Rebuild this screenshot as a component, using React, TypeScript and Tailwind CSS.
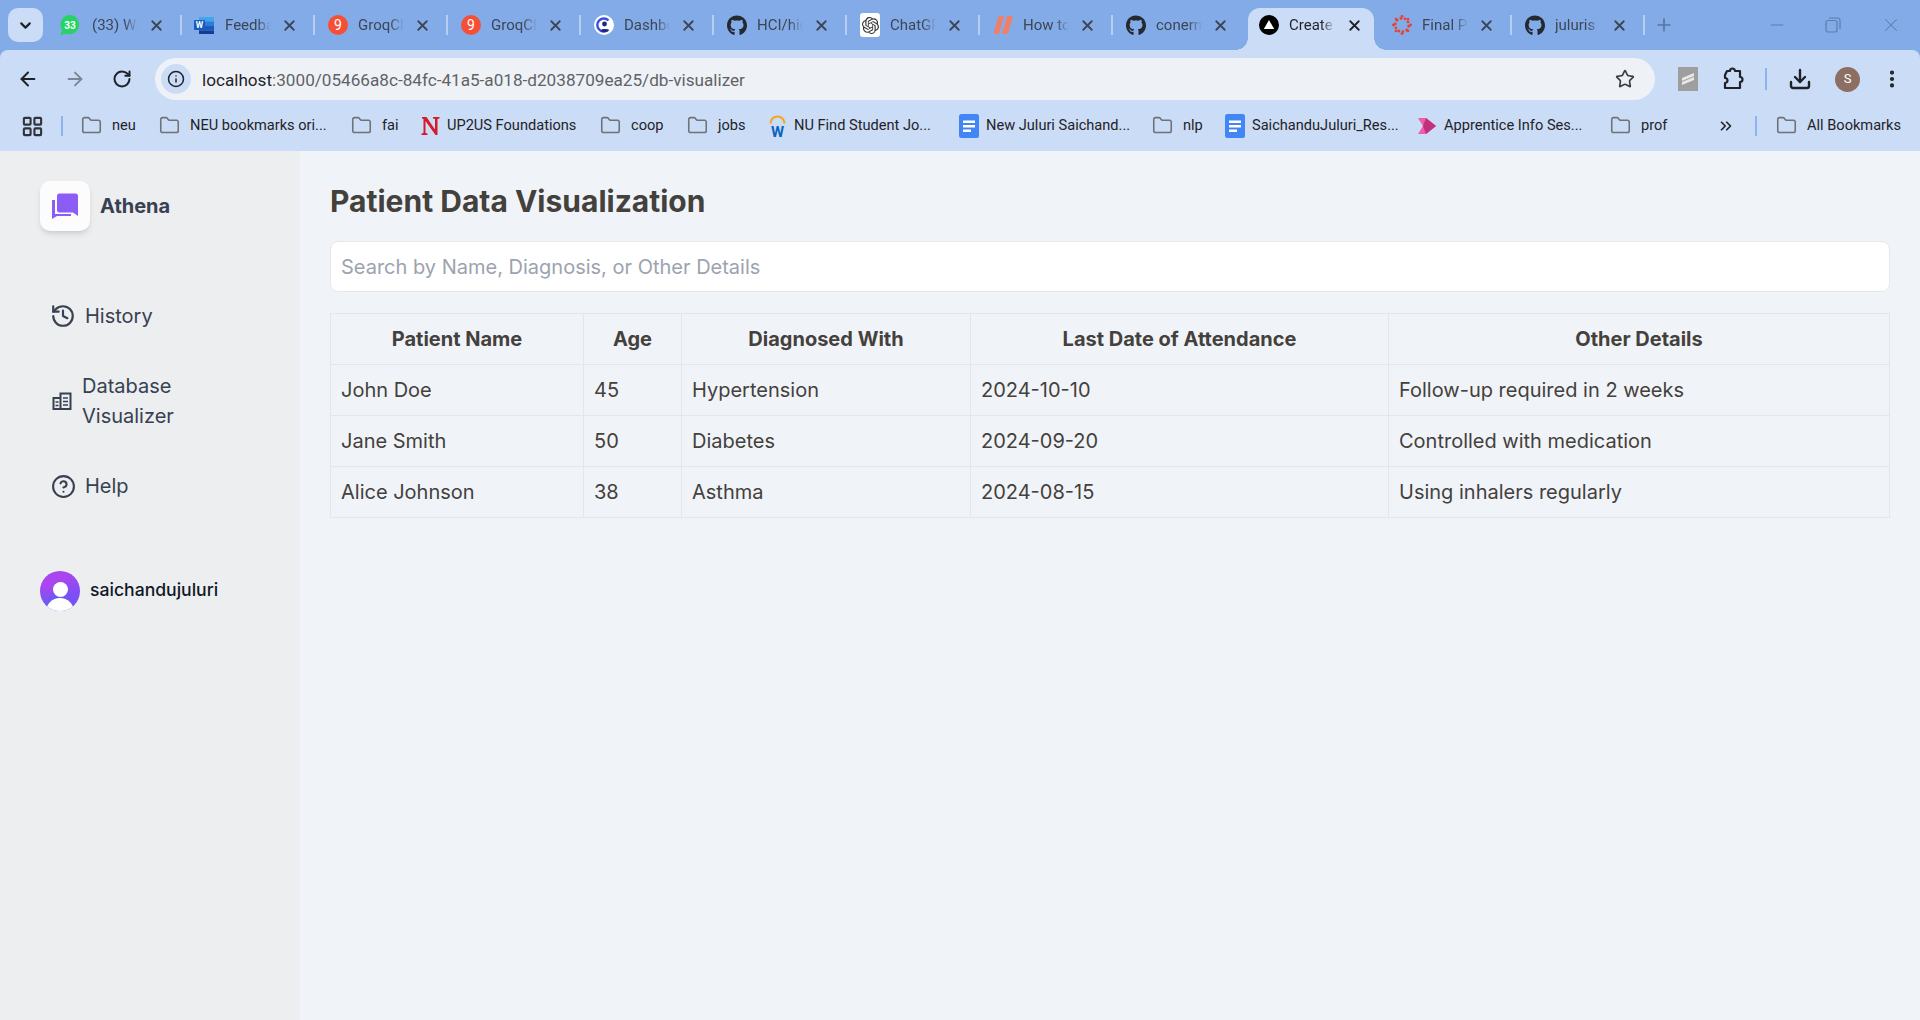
import React from 'react';
import {
  ArrowLeft,
  ArrowRight,
  ChevronDown,
  ChevronsRight,
  CircleHelp,
  Download,
  EllipsisVertical,
  Folder,
  History,
  Info,
  LayoutGrid,
  Minus,
  Plus,
  RotateCw,
  Star,
  X,
} from 'lucide-react';
import { FaGithub } from 'react-icons/fa';
import { SiOpenai } from 'react-icons/si';

const WhatsAppIcon = () => (
  <svg className="-translate-x-[2px]" width="20" height="24" viewBox="0 0 20 24">
    <path d="M10 2a9.5 9.5 0 0 0-8 14.6L.6 22l5.6-1.4A9.6 9.6 0 1 0 10 2z" fill="#25D366" />
    <text x="10" y="16" textAnchor="middle" fontSize="10" fontWeight="700" fill="#fff" fontFamily="Roboto, sans-serif">33</text>
  </svg>
);

const WordIcon = () => (
  <svg className="-translate-x-[1px]" width="20" height="20" viewBox="0 0 20 20">
    <rect x="5" y="2" width="15" height="4.5" fill="#41A5EE" />
    <rect x="5" y="6.5" width="15" height="4.5" fill="#2B7CD3" />
    <rect x="5" y="11" width="15" height="4.5" fill="#185ABD" />
    <rect x="5" y="15.5" width="15" height="3.5" fill="#103F91" />
    <rect x="0" y="5" width="11" height="10" rx="1" fill="#185ABD" />
    <text x="5.5" y="13" textAnchor="middle" fontSize="8.5" fontWeight="700" fill="#fff" fontFamily="Roboto, sans-serif">W</text>
  </svg>
);

const GroqIcon = () => (
  <div className="w-5 h-5 rounded-full bg-[#F55036] flex items-center justify-center text-white text-[14px] leading-none">9</div>
);

const DashIcon = () => (
  <svg width="20" height="20" viewBox="0 0 20 20">
    <circle cx="10" cy="10" r="10" fill="#fff" />
    <path d="M14.5 5.5A6.5 6.5 0 1 0 14.5 14.5" fill="none" stroke="#3B4FE0" strokeWidth="2.4" />
    <circle cx="10.5" cy="9" r="2.4" fill="#1E2A78" />
    <path d="M6.5 16c.5-2.6 7-2.6 8 0a8 8 0 0 1-8 0z" fill="#1E2A78" />
  </svg>
);

const ChatIcon = () => (
  <div className="w-5 h-6 rounded-[3px] bg-white flex items-center justify-center">
    <SiOpenai size={17} className="text-[#333]" />
  </div>
);

const SlashIcon = () => (
  <svg width="20" height="20" viewBox="0 0 20 20">
    <path d="M5.5 1H11L6 19H.5zM14 1h6l-5 18H9z" fill="#EE8069" />
  </svg>
);

const VercelIcon = () => (
  <svg width="20" height="20" viewBox="0 0 20 20">
    <circle cx="10" cy="10" r="10" fill="#000" />
    <path d="M10 5l5.2 9H4.8z" fill="#fff" />
  </svg>
);

const CanvasIcon = () => (
  <svg width="20" height="20" viewBox="0 0 20 20" fill="#E8412F">
    <circle cx="10" cy="10" r="6.8" fill="none" stroke="#E8412F" strokeWidth="2.4" strokeDasharray="2.6 1.6" />
    <circle cx="10" cy="1.4" r="1.4" />
    <circle cx="10" cy="18.6" r="1.4" />
    <circle cx="1.4" cy="10" r="1.4" />
    <circle cx="18.6" cy="10" r="1.4" />
    <circle cx="4" cy="4" r="1.3" />
    <circle cx="16" cy="4" r="1.3" />
    <circle cx="4" cy="16" r="1.3" />
    <circle cx="16" cy="16" r="1.3" />
  </svg>
);

const GithubIcon = () => <FaGithub size={21} className="text-[#24292f]" />;

const tabs = [
  { title: '(33) WhatsApp', icon: <WhatsAppIcon /> },
  { title: 'Feedback', icon: <WordIcon /> },
  { title: 'GroqCloud', icon: <GroqIcon /> },
  { title: 'GroqCloud', icon: <GroqIcon /> },
  { title: 'Dashboard', icon: <DashIcon /> },
  { title: 'HCI/hig', icon: <GithubIcon /> },
  { title: 'ChatGPT', icon: <ChatIcon /> },
  { title: 'How to', icon: <SlashIcon /> },
  { title: 'conerm', icon: <GithubIcon /> },
  { title: 'Create', icon: <VercelIcon />, active: true },
  { title: 'Final Project', icon: <CanvasIcon /> },
  { title: 'juluris', icon: <GithubIcon /> },
];

const FolderIcon = () => <Folder size={21} strokeWidth={1.8} className="text-[#6f7276]" />;

const DocIcon = () => (
  <svg width="20" height="24" viewBox="0 0 20 24">
    <rect width="20" height="24" rx="2.5" fill="#4285F4" />
    <path d="M4 6.5h12v2.4H4zM4 11h12v2.4H4zM4 15.5h8v2.4H4z" fill="#fff" />
  </svg>
);

const NIcon = () => (
  <svg width="19" height="20" viewBox="0 0 19 20">
    <path d="M1 1h4.5L14 13.5V3l-2-.4V1h6.5v1.6L16.5 3v16h-2L4.5 5v12l2 .5V19H.5v-1.5l2-.5V3L1 2.6z" fill="#D41B2C" />
  </svg>
);

const WorkdayIcon = () => (
  <svg width="19" height="24" viewBox="0 0 19 24">
    <path d="M2.5 9.5a7 7 0 0 1 14 0" fill="none" stroke="#F5A623" strokeWidth="2.2" />
    <text x="9.5" y="23" textAnchor="middle" fontSize="15" fontWeight="700" fill="#0B64C0" fontFamily="Roboto, sans-serif">W</text>
  </svg>
);

const PinkArrowIcon = () => (
  <svg width="18" height="18" viewBox="0 0 18 18">
    <path d="M0 1h8l10 8-10 8H0l5-8z" fill="#EE5FA7" />
    <path d="M8 1l10 8-10 8-3-8z" fill="#C22F7C" />
  </svg>
);

const bookmarks = [
  { label: 'neu', icon: <FolderIcon />, w: 'w-[24px]', gap: 'ml-[18px]', folder: true },
  { label: 'NEU bookmarks ori...', icon: <FolderIcon />, w: 'w-[140px]', gap: 'ml-[23px]', folder: true },
  { label: 'fai', icon: <FolderIcon />, w: 'w-[16px]', gap: 'ml-[21px]', folder: true },
  { label: 'UP2US Foundations', icon: <NIcon />, w: 'w-[130px]', gap: 'ml-[22px]' },
  { label: 'coop', icon: <FolderIcon />, w: 'w-[33px]', gap: 'ml-[23px]', folder: true },
  { label: 'jobs', icon: <FolderIcon />, w: 'w-[28px]', gap: 'ml-[23px]', folder: true },
  { label: 'NU Find Student Jo...', icon: <WorkdayIcon />, w: 'w-[138px]', gap: 'ml-[21px]' },
  { label: 'New Juluri Saichand...', icon: <DocIcon />, w: 'w-[144px]', gap: 'ml-[27px]' },
  { label: 'nlp', icon: <FolderIcon />, w: 'w-[21px]', gap: 'ml-[22px]', folder: true },
  { label: 'SaichanduJuluri_Res...', icon: <DocIcon />, w: 'w-[143px]', gap: 'ml-[21px]' },
  { label: 'Apprentice Info Ses...', icon: <PinkArrowIcon />, w: 'w-[139px]', gap: 'ml-[22px]' },
  { label: 'prof', icon: <FolderIcon />, w: 'w-[28px]', gap: 'ml-[27px]', folder: true },
];

const patients = [
  { name: 'John Doe', age: 45, diagnosis: 'Hypertension', date: '2024-10-10', details: 'Follow-up required in 2 weeks' },
  { name: 'Jane Smith', age: 50, diagnosis: 'Diabetes', date: '2024-09-20', details: 'Controlled with medication' },
  { name: 'Alice Johnson', age: 38, diagnosis: 'Asthma', date: '2024-08-15', details: 'Using inhalers regularly' },
];

const columns = ['Patient Name', 'Age', 'Diagnosed With', 'Last Date of Attendance', 'Other Details'];

const TabStrip = () => (
  <div className="h-[50px] flex items-start shrink-0">
    <button className="ml-2 mt-2 w-[35px] h-[34px] rounded-[10px] bg-[#CBDCF6] flex items-center justify-center">
      <ChevronDown size={17} strokeWidth={3} className="text-[#1f2328]" />
    </button>
    <div className="ml-[6px] flex">
      {tabs.map((tab, i) =>
        tab.active ? (
          <div key={i} className="relative w-[126px] h-[42px] mt-2 ml-[2px] mr-[5px] pb-2 rounded-t-[12px] bg-[#CBDCF6] flex items-center pl-[11px]">
            <div className="absolute bottom-0 -left-3 w-3 h-3 bg-[radial-gradient(circle_at_0_0,transparent_11.5px,#CBDCF6_12px)]" />
            <div className="absolute bottom-0 -right-3 w-3 h-3 bg-[radial-gradient(circle_at_100%_0,transparent_11.5px,#CBDCF6_12px)]" />
            <div className="w-5 flex justify-center shrink-0">{tab.icon}</div>
            <span className="ml-[10px] w-[46px] overflow-hidden whitespace-nowrap text-[15px] text-[#1f2328] [mask-image:linear-gradient(to_right,black_70%,transparent)]">{tab.title}</span>
            <X size={17} strokeWidth={2.6} className="ml-[11px] text-[#1f2328]" />
          </div>
        ) : (
          <div key={i} className="w-[133px] h-[50px] flex items-center pl-[13px] relative">
            <div className="w-5 flex justify-center shrink-0">{tab.icon}</div>
            <span className="ml-[10px] w-[46px] overflow-hidden whitespace-nowrap text-[15px] text-[#3c4654] [mask-image:linear-gradient(to_right,black_70%,transparent)]">{tab.title}</span>
            <X size={17} strokeWidth={2.6} className="ml-[10px] text-[#3c4654]" />
            {i !== 8 && <div className="absolute right-0 top-[15px] w-[2px] h-[20px] bg-[#B7CEF2]" />}
          </div>
        ),
      )}
    </div>
    <Plus size={20} strokeWidth={2} className="ml-[9px] mt-[15px] text-[#56749f]" />
    <div className="ml-auto flex items-center text-[#5d7cad] h-[50px]">
      <Minus size={20} strokeWidth={1.2} />
      <svg className="ml-[38px]" width="16" height="16" viewBox="0 0 16 16" fill="none" stroke="currentColor" strokeWidth="1.2">
        <rect x="1" y="3.5" width="11" height="11.5" rx="2" />
        <path d="M4 1h8.5A2.5 2.5 0 0 1 15 3.5V12" />
      </svg>
      <X className="ml-[39px] mr-[18px]" size={22} strokeWidth={1.1} />
    </div>
  </div>
);

const AddressBar = () => (
  <div className="h-[50px] flex items-center shrink-0 pl-1 pt-[8px]">
    <div className="w-[47px] flex justify-center"><ArrowLeft size={22} strokeWidth={2.2} className="text-[#1f2328]" /></div>
    <div className="w-[47px] flex justify-center"><ArrowRight size={22} strokeWidth={2} className="text-[#7c8695]" /></div>
    <div className="w-[47px] flex justify-center"><RotateCw size={20} strokeWidth={2.4} className="text-[#1f2328]" /></div>
    <div className="ml-[10px] w-[1500px] h-[42px] rounded-full bg-[#EEF2F7] flex items-center pl-[6px]">
      <div className="w-[30px] h-[30px] rounded-full bg-[#CBDCF6] flex items-center justify-center">
        <Info size={18} strokeWidth={2} className="text-[#1f2328]" />
      </div>
      <span className="ml-[11px] pt-[3px] text-[17.15px] text-[#5f6368] whitespace-nowrap"><span className="text-[#1f2328]">localhost</span>:3000/05466a8c-84fc-41a5-a018-d2038709ea25/db-visualizer</span>
      <Star size={20} strokeWidth={2} className="ml-auto mr-[20px] text-[#3a3f45]" />
    </div>
    <div className="ml-[23px] w-[20px] h-[24px] bg-[#9e9e9e] flex items-center justify-center">
      <svg width="14" height="14" viewBox="0 0 14 14"><path d="M1 6l12-5v3L1 9zM1 10l12-5v3L1 13z" fill="#e8e8e8" /></svg>
    </div>
    <svg className="ml-[24px]" width="22" height="24" viewBox="0 0 22 24" fill="none" stroke="#1f2328" strokeWidth="2.2" strokeLinejoin="round">
      <path d="M5 4h3a2.5 2.5 0 0 1 5 0h5v6a2.5 2.5 0 0 1 0 5v6H3v-5a2.5 2.5 0 0 0 0-5V8z" />
    </svg>
    <div className="ml-[21px] w-[2px] h-[22px] bg-[#8DB4EC]" />
    <Download size={24} strokeWidth={2.4} className="ml-[21px] text-[#1f2328]" />
    <div className="ml-[23px] w-[25px] h-[25px] rounded-full bg-[#8D6E63] flex items-center justify-center text-white text-[13px]">S</div>
    <EllipsisVertical size={22} strokeWidth={2.6} className="ml-[21px] text-[#1f2328]" />
  </div>
);

const BookmarksBar = () => (
  <div className="h-[50px] flex items-center shrink-0 pl-[21px] pt-[2px] text-[14.6px] text-[#1f2328]">
    <LayoutGrid size={23} strokeWidth={2.2} className="text-[#30343a]" />
    <div className="ml-[17px] w-[2px] h-[20px] bg-[#8DB4EC]" />
    {bookmarks.map((b, i) => (
      <div key={i} className={`flex items-center ${b.gap}`}>
        <div className={b.folder ? 'w-[21px] flex justify-center shrink-0' : 'w-5 flex justify-center shrink-0'}>{b.icon}</div>
        <span className={`${b.folder ? 'ml-[10px]' : 'ml-[7px]'} whitespace-nowrap ${b.w}`}>{b.label}</span>
      </div>
    ))}
    <ChevronsRight size={18} strokeWidth={2.2} className="ml-[48px] text-[#1f2328]" />
    <div className="ml-[20px] w-[2px] h-[20px] bg-[#8DB4EC]" />
    <div className="ml-[19px] flex items-center">
      <FolderIcon />
      <span className="ml-[10px] whitespace-nowrap">All Bookmarks</span>
    </div>
  </div>
);

const Sidebar = () => (
  <aside className="w-[300px] shrink-0 bg-[#ECEEF0] pl-10 pt-[30px] font-['Inter',sans-serif]">
    <div className="flex items-center">
      <div className="w-[50px] h-[50px] rounded-[10px] bg-[#FCFCFC] shadow-md flex items-center justify-center">
        <svg width="26" height="26" viewBox="0 0 26 26">
          <path d="M0 7h3v14h16v2H5l-5 3z" fill="#8B5CF6" />
          <path d="M5 3a2.5 2.5 0 0 1 2.500-2.500h16A2.500 2.500 0 0 1 26 3v20l-5-3.500H7.500A2.500 2.500 0 0 1 5 17z" fill="#8B5CF6" />
        </svg>
      </div>
      <span className="ml-[10px] text-[20px] font-bold text-[#374151]">Athena</span>
    </div>

    <nav className="mt-[70px] pl-3 flex flex-col gap-10 text-[20px] leading-[30px] text-[#374151]">
      <div className="flex items-center">
        <History size={26} strokeWidth={2} className="-ml-[2px]" />
        <span className="ml-[9px]">History</span>
      </div>
      <div className="flex items-center">
        <svg width="20" height="18" viewBox="0 0 19 18" fill="none" stroke="currentColor" strokeWidth="2">
          <path d="M1 6h7v11H1zM8 1.500h10V17H8z" />
          <path d="M3 10h3M3 13.500h3M10.500 6h5M10.500 9.500h5M10.500 13h5" strokeWidth="1.500" />
        </svg>
        <span className="ml-[10px] w-[100px]">Database Visualizer</span>
      </div>
      <div className="flex items-center">
        <CircleHelp size={25} strokeWidth={2} className="-ml-px" />
        <span className="ml-[9px]">Help</span>
      </div>
    </nav>

    <div className="mt-[70px] flex items-center">
      <div className="relative w-10 h-10 rounded-full overflow-hidden bg-[conic-gradient(from_200deg,#5b5ff5,#a946f0,#a946f0,#7c4ff5,#5b5ff5)]">
        <div className="absolute left-[12.500px] top-[11px] w-[15px] h-[15px] rounded-full bg-white" />
        <div className="absolute left-[6px] top-[27px] w-[28px] h-[20px] rounded-t-full bg-white" />
      </div>
      <span className="ml-[10px] -mt-px text-[17.6px] font-medium text-[#111827]">saichandujuluri</span>
    </div>
  </aside>
);

export default function App() {
  return (
    <div className="h-[1020px] flex flex-col overflow-hidden bg-[#83ABE8] font-['Roboto',sans-serif]">
      <TabStrip />
      <div className="bg-[#CBDCF6] rounded-t-[8px] pb-px shrink-0">
        <AddressBar />
        <BookmarksBar />
      </div>
      <div className="flex-1 flex">
        <Sidebar />
        <main className="flex-1 bg-[#F0F4F9] pl-[30px] pr-[31px] pt-8 font-['Inter',sans-serif] text-[#44403c]">
          <h1 className="text-[30px] leading-9 font-bold">Patient Data Visualization</h1>
          <input
            placeholder="Search by Name, Diagnosis, or Other Details"
            className="mt-[22px] w-full h-[51px] px-[10px] bg-white border border-[#E5E7EB] rounded-lg text-[20px] placeholder:text-[#9CA3AF] outline-none"
          />
          <table className="mt-[21px] w-[1559px] table-fixed border-collapse text-[20px]">
            <colgroup>
              <col className="w-[253px]" />
              <col className="w-[98px]" />
              <col className="w-[289px]" />
              <col className="w-[418px]" />
              <col className="w-[501px]" />
            </colgroup>
            <thead>
              <tr className="h-[51px]">
                {columns.map((c) => (
                  <th key={c} className="border border-[#E2E6ED] px-[10px] font-bold text-center">{c}</th>
                ))}
              </tr>
            </thead>
            <tbody>
              {patients.map((p) => (
                <tr key={p.name} className="h-[51px]">
                  <td className="border border-[#E2E6ED] px-[10px]">{p.name}</td>
                  <td className="border border-[#E2E6ED] px-[10px]">{p.age}</td>
                  <td className="border border-[#E2E6ED] px-[10px]">{p.diagnosis}</td>
                  <td className="border border-[#E2E6ED] px-[10px]">{p.date}</td>
                  <td className="border border-[#E2E6ED] px-[10px]">{p.details}</td>
                </tr>
              ))}
            </tbody>
          </table>
        </main>
      </div>
    </div>
  );
}
